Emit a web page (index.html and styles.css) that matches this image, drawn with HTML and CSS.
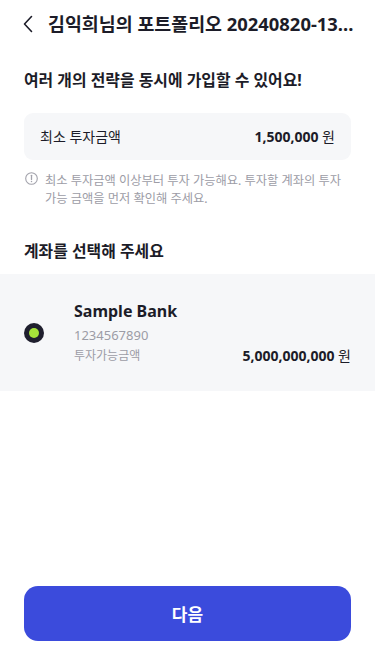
FILE: index.html
```html
<!DOCTYPE html>
<html lang="ko">
<head>
<meta charset="utf-8">
<meta name="viewport" content="width=device-width, initial-scale=1">
<title>포트폴리오 가입</title>
<link rel="stylesheet" href="styles.css">
</head>
<body>
<div class="page">
  <header class="header">
    <button class="back" aria-label="뒤로">
      <svg width="10" height="18" viewBox="0 0 10 18"><path d="M8.5 1.5 L1.5 9 L8.5 16.5" fill="none" stroke="#1c1c28" stroke-width="1.6" stroke-linecap="round" stroke-linejoin="round"/></svg>
    </button>
    <h1 class="title">김익희님의 포트폴리오 20240820-13...</h1>
  </header>

  <main class="content">
    <p class="subtitle">여러 개의 전략을 동시에 가입할 수 있어요!</p>

    <div class="min-box">
      <span class="min-label">최소 투자금액</span>
      <span class="min-value"><b>1,500,000</b> 원</span>
    </div>

    <div class="note">
      <svg class="note-icon" width="13" height="13" viewBox="0 0 13 13"><circle cx="6.5" cy="6.5" r="5.8" fill="none" stroke="#a2a2ab" stroke-width="1.1"/><path d="M6.5 3.3 V7.4" stroke="#a2a2ab" stroke-width="1.3" stroke-linecap="round"/><circle cx="6.5" cy="9.4" r="0.75" fill="#a2a2ab"/></svg>
      <p class="note-text">최소 투자금액 이상부터 투자 가능해요. 투자할 계좌의 투자 가능 금액을 먼저 확인해 주세요.</p>
    </div>

    <h2 class="section-title">계좌를 선택해 주세요</h2>
  </main>

  <div class="account">
    <span class="radio"><span class="radio-dot"></span></span>
    <div class="account-info">
      <div class="bank">Sample Bank</div>
      <div class="acc-no">1234567890</div>
      <div class="avail-row">
        <span class="avail-label">투자가능금액</span>
        <span class="avail-value"><b>5,000,000,000</b> 원</span>
      </div>
    </div>
  </div>

  <div class="footer">
    <button class="next">다음</button>
  </div>
</div>
</body>
</html>
```

FILE: styles.css
```css
* { box-sizing: border-box; }
html, body { margin: 0; padding: 0; background: #fff; }
body {
  font-family: "Noto Sans", "Noto Sans CJK KR", sans-serif;
  color: #1c1c28;
}
.page {
  width: 375px;
  min-height: 663px;
  display: flex;
  flex-direction: column;
}
.header {
  height: 48px;
  display: flex;
  align-items: center;
  padding: 0 8px 0 23px;
  gap: 15px;
}
.back {
  border: 0;
  background: none;
  padding: 0;
  width: 10px;
  height: 18px;
  display: flex;
}
.title {
  margin: 0;
  font-size: 18.4px;
  font-weight: 700;
  line-height: 24px;
  white-space: nowrap;
  flex: 1;
  min-width: 0;
}
.content { padding: 0 24px; }
.subtitle {
  margin: 21px 0 0;
  font-size: 15.9px;
  font-weight: 700;
  line-height: 22px;
}
.min-box {
  margin-top: 22px;
  background: #f6f7f9;
  border-radius: 9px;
  padding: 13px 16px;
  display: flex;
  justify-content: space-between;
  align-items: center;
  line-height: 21px;
}
.min-label { font-size: 14px; }
.min-value { font-size: 14px; }
.min-value b { font-weight: 700; }
.note {
  margin-top: 12px;
  display: flex;
  gap: 7px;
  align-items: flex-start;
}
.note-icon { flex: none; margin-top: 0; margin-left: 1px; }
.note-text {
  margin: 0;
  font-size: 12.25px;
  line-height: 18px;
  color: #9c9ca6;
}
.section-title {
  margin: 32px 0 0;
  font-size: 15.9px;
  font-weight: 700;
  line-height: 22px;
}
.account {
  margin-top: 12px;
  background: #f6f7f9;
  padding: 26px 24px 25px;
  display: flex;
  align-items: center;
  gap: 30px;
}
.radio {
  width: 20px;
  height: 20px;
  border-radius: 50%;
  background: #1f1f2e;
  display: flex;
  align-items: center;
  justify-content: center;
  flex: none;
}
.radio-dot {
  width: 10px;
  height: 10px;
  border-radius: 50%;
  background: #a6e33a;
}
.account-info { flex: 1; }
.bank {
  font-size: 16px;
  font-weight: 700;
  line-height: 22px;
}
.acc-no {
  font-size: 13px;
  line-height: 21px;
  color: #9c9ca6;
  margin-top: 3px;
}
.avail-row {
  display: flex;
  justify-content: space-between;
  align-items: center;
  line-height: 20px;
}
.avail-label { font-size: 12px; color: #9c9ca6; }
.avail-value { font-size: 14px; }
.avail-value b { font-weight: 700; }
.footer {
  margin-top: auto;
  padding: 0 24px 22px;
}
.next {
  width: 100%;
  height: 55px;
  border: 0;
  border-radius: 14px;
  background: #3b4bdc;
  color: #fff;
  font-family: "Noto Sans CJK KR", sans-serif;
  font-size: 17px;
  font-weight: 600;
}
```
